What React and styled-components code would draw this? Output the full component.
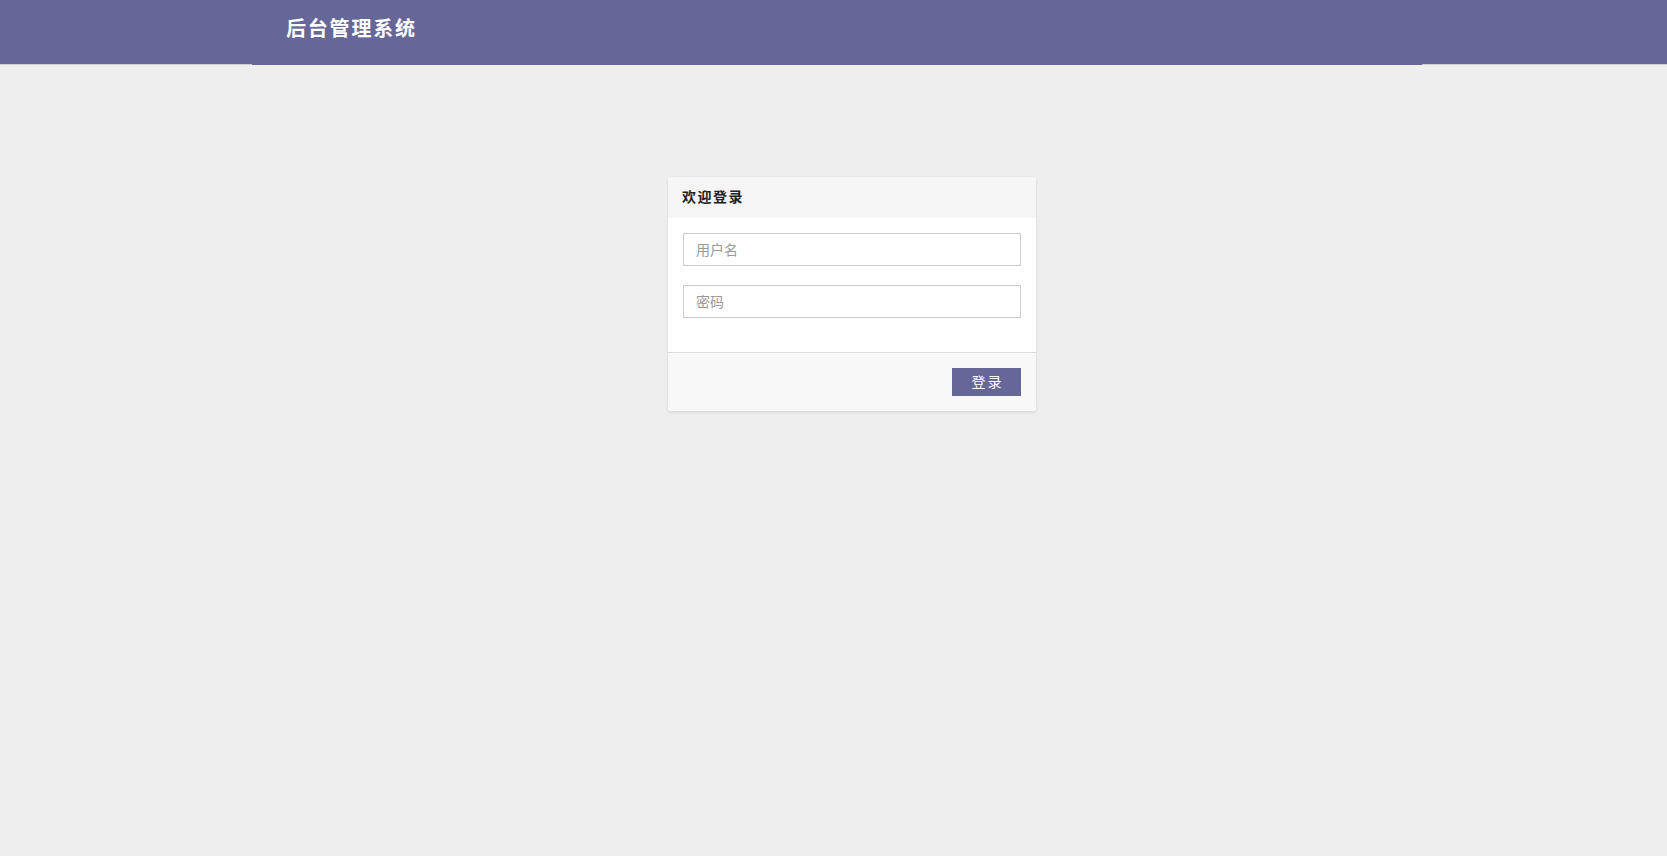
import React from "react";
import styled, { createGlobalStyle } from "styled-components";

const Global = createGlobalStyle`
  html, body { margin: 0; padding: 0; }
  body {
    background: #eeeeee;
    font-family: "Noto Sans CJK SC", "Noto Sans", "Liberation Sans", sans-serif;
    color: #333;
    min-height: 856px;
  }
  * { box-sizing: border-box; }
`;

const NavBar = styled.header`
  height: 65px;
  background: #676699;
  border-bottom: 1px solid #cfcfcf;
`;

const NavInner = styled.div`
  width: 1170px;
  height: 65px;
  margin-left: 252px;
  background: #676699;
  padding: 14px 0 0 34px;
`;

const Brand = styled.div`
  color: #ffffff;
  font-size: 20px;
  line-height: 28px;
  font-weight: 700;
  letter-spacing: 1.8px;
`;

const Main = styled.main`
  padding-top: 112px;
  padding-left: 668px;
`;

const Card = styled.div`
  width: 368px;
  background: #fff;
  border-radius: 3px;
  box-shadow: 0 1px 3px rgba(0, 0, 0, 0.12);
  overflow: hidden;
`;

const CardHeader = styled.div`
  height: 41px;
  background: #f5f5f5;
  padding: 0 14px 3px;
  display: flex;
  align-items: center;
  font-size: 14px;
  font-weight: 600;
  letter-spacing: 1.5px;
  color: #222;
`;

const CardBody = styled.div`
  padding: 15px;
`;

const Field = styled.input`
  display: block;
  width: 100%;
  height: 33px;
  border: 1px solid #cccccc;
  border-radius: 0;
  padding: 0 12px 2px;
  margin: 0 0 19px;
  font-family: inherit;
  font-size: 14px;
  color: #333;
  background: #fff;
  outline: none;
  &::placeholder { color: #999; }
`;

const CardFooter = styled.div`
  border-top: 1px solid #dddddd;
  background: #f8f8f8;
  padding: 15px;
  display: flex;
  justify-content: flex-end;
`;

const Button = styled.button`
  width: 69px;
  height: 28px;
  border: none;
  border-radius: 0;
  background: #676699;
  color: #fff;
  font-family: inherit;
  font-size: 14px;
  letter-spacing: 2px;
  padding: 0 0 3px 2px;
  cursor: pointer;
`;

export default function App() {
  return (
    <>
      <Global />
      <NavBar>
        <NavInner>
          <Brand>后台管理系统</Brand>
        </NavInner>
      </NavBar>
      <Main>
        <Card>
          <CardHeader>欢迎登录</CardHeader>
          <CardBody>
            <Field type="text" placeholder="用户名" />
            <Field type="password" placeholder="密码" />
          </CardBody>
          <CardFooter>
            <Button>登录</Button>
          </CardFooter>
        </Card>
      </Main>
    </>
  );
}
